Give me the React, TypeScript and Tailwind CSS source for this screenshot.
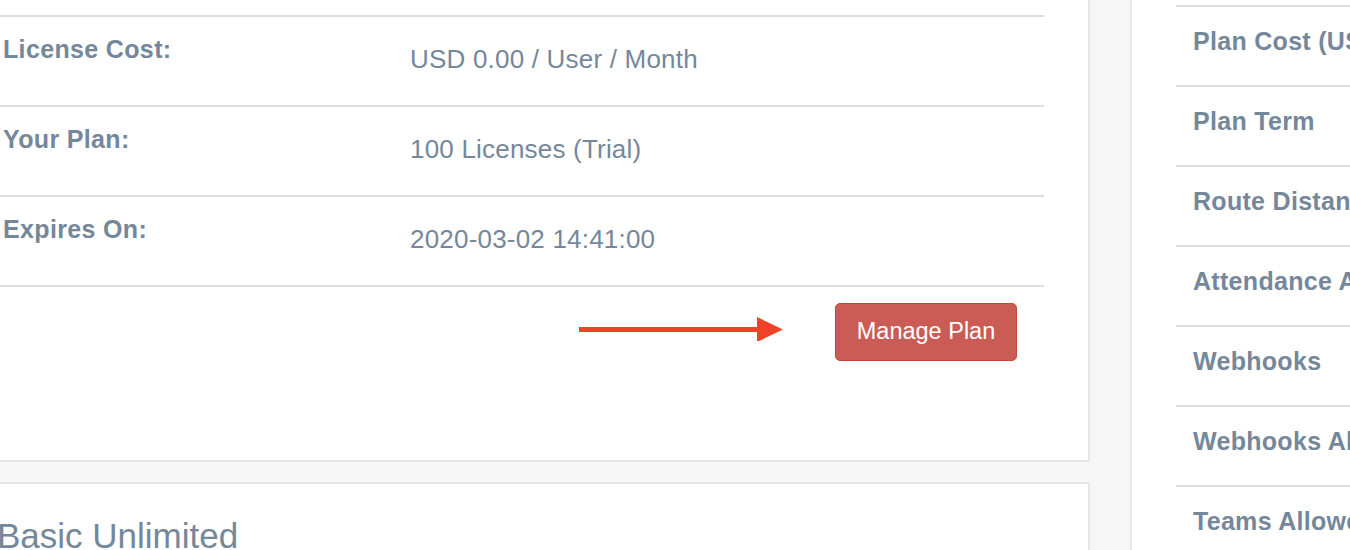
import React from "react";

const detail = [
  { label: "License Cost:", value: "USD 0.00 / User / Month" },
  { label: "Your Plan:", value: "100 Licenses (Trial)" },
  { label: "Expires On:", value: "2020-03-02 14:41:00" },
];

const features = [
  "Plan Cost (USD)",
  "Plan Term",
  "Route Distance",
  "Attendance App",
  "Webhooks",
  "Webhooks Allowed",
  "Teams Allowed",
];

function Arrow() {
  return (
    <svg width="204" height="24" viewBox="0 0 204 24" className="mt-[14px] shrink-0">
      <rect x="0" y="10" width="180" height="5" fill="#ee4327" />
      <polygon points="178,0 204,12.5 178,25" fill="#ee4327" />
    </svg>
  );
}

export default function App() {
  return (
    <div
      className="flex h-[550px] w-[1350px] overflow-hidden bg-[#f6f6f6] text-[#75879a]"
      style={{ fontFamily: '"Liberation Sans", Arial, sans-serif' }}
    >
      <div className="flex w-[1090px] shrink-0 flex-col">
        <div className="h-[462px] shrink-0 border-r-2 border-b-2 border-[#e7e7ea] bg-white pt-[15px] pr-[44px]">
          {detail.map((d) => (
            <div key={d.label} className="flex h-[90px] border-t-2 border-[#dedede]">
              <div className="w-[410px] pt-[17px] pl-[3px] text-[25px] leading-[30px] font-bold tracking-[0.35px]">
                {d.label}
              </div>
              <div className="pt-[27px] text-[26px] leading-[30px] tracking-[0.2px]">{d.value}</div>
            </div>
          ))}
          <div className="flex items-start justify-end border-t-2 border-[#dedede] pt-[16px] pr-[27px]">
            <Arrow />
            <button className="ml-[52px] h-[58px] w-[182px] rounded-[5px] border border-[#c2463f] bg-[#cb5c55] text-[23.5px] text-white">
              Manage Plan
            </button>
          </div>
        </div>
        <div className="mt-[20px] flex-1 border-t-2 border-r-2 border-[#e7e7ea] bg-white pt-[32px]">
          <div className="-ml-[3px] text-[35px] leading-[40px] whitespace-nowrap">Basic Unlimited</div>
        </div>
      </div>
      <div className="ml-[40px] flex-1 overflow-hidden border-l-2 border-[#e7e7ea] bg-white pt-[5px] pl-[44px]">
        {features.map((f) => (
          <div
            key={f}
            className="h-[80px] border-t-2 border-[#dedede] pt-[19px] pl-[17px] text-[25px] leading-[30px] font-bold tracking-[0.3px] whitespace-nowrap"
          >
            {f}
          </div>
        ))}
      </div>
    </div>
  );
}
